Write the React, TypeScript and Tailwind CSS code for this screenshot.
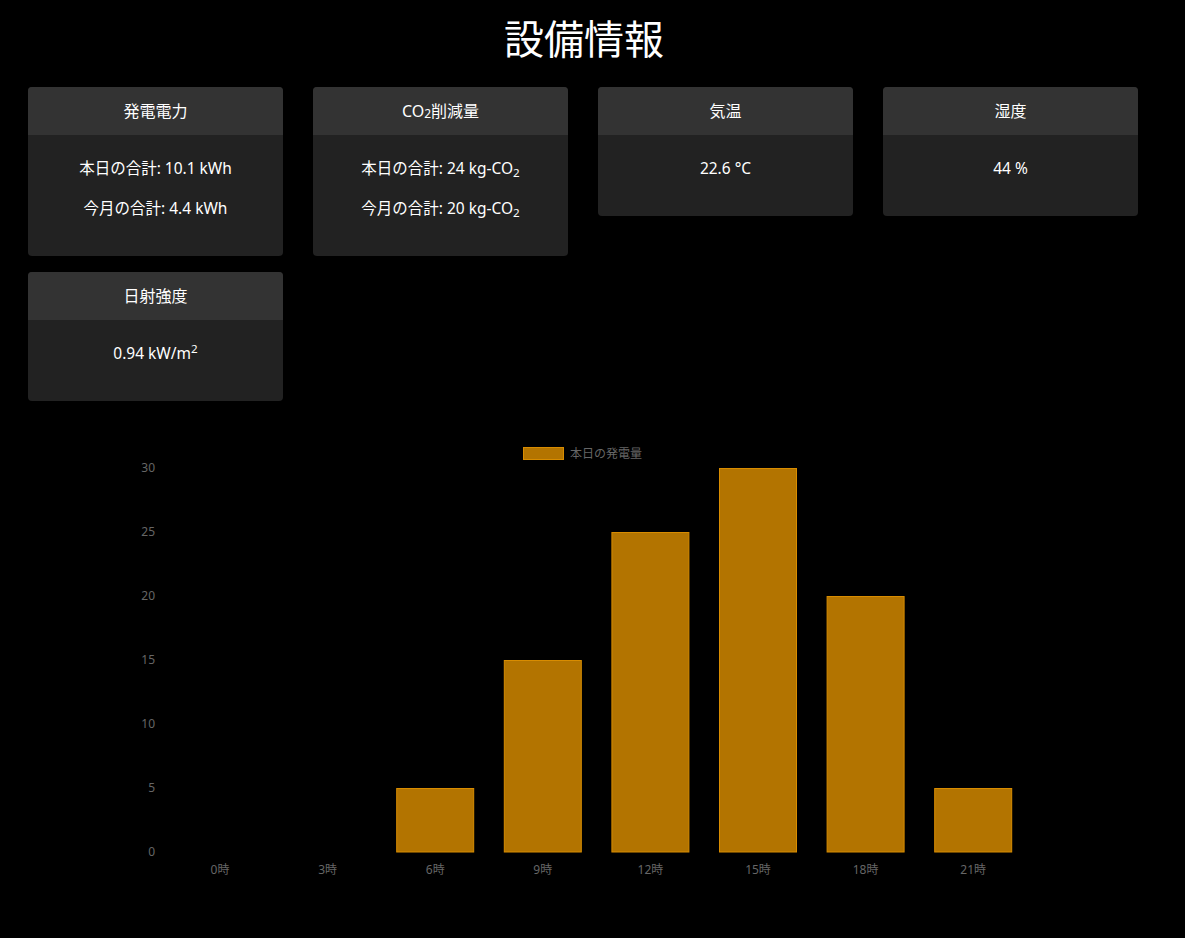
import React from 'react';

const font = { fontFamily: '"Noto Sans", "Noto Sans CJK JP", sans-serif' };

type Card = { title: React.ReactNode; lines: React.ReactNode[] };

const cards: Card[] = [
  { title: '発電電力', lines: ['本日の合計: 10.1 kWh', '今月の合計: 4.4 kWh'] },
  {
    title: (
      <>
        CO<sub>2</sub>削減量
      </>
    ),
    lines: [
      <>
        本日の合計: 24 kg-CO<sub>2</sub>
      </>,
      <>
        今月の合計: 20 kg-CO<sub>2</sub>
      </>,
    ],
  },
  { title: '気温', lines: ['22.6 °C'] },
  { title: '湿度', lines: ['44 %'] },
  {
    title: '日射強度',
    lines: [
      <>
        0.94 kW/m<sup>2</sup>
      </>,
    ],
  },
];

const hours = [0, 3, 6, 9, 12, 15, 18, 21];
const values = [0, 0, 5, 15, 25, 30, 20, 5];

function InfoCard({ card }: { card: Card }) {
  return (
    <div className="w-[255px] rounded-[4px] overflow-hidden bg-[#222222]">
      <div className="h-[48px] bg-[#333333] flex items-center justify-center text-[16px] text-white">
        {card.title}
      </div>
      <div className="pt-[21px] pb-[20px] text-center text-[15.5px] text-white">
        {card.lines.map((line, i) => (
          <p key={i} className="leading-[24px] mb-4">
            {line}
          </p>
        ))}
      </div>
    </div>
  );
}

// chart drawn in svg space; origin at page (120, 430)
function Chart() {
  const y = (v: number) => 421 - 12.8 * v;
  const cx = (i: number) => 100 + 107.6 * i;
  return (
    <svg width="920" height="460" className="block" style={font}>
      {/* legend */}
      <rect x="403.5" y="16.5" width="40" height="12" fill="#b37400" stroke="#d88c00" />
      <text x="450" y="26.5" fontSize="12" fill="#666666">
        本日の発電量
      </text>
      {[0, 5, 10, 15, 20, 25, 30].map((v) => (
        <text key={v} x="35" y={y(v) + 4} fontSize="12" fill="#666666" textAnchor="end">
          {v}
        </text>
      ))}
      {values.map((v, i) =>
        v > 0 ? (
          <rect
            key={i}
            x={cx(i) - 38.5}
            y={y(v) + 0.5}
            width="77"
            height={12.8 * v - 0.5}
            fill="#b37400"
            stroke="#d88c00"
            strokeWidth="1"
          />
        ) : null
      )}
      {hours.map((h, i) => (
        <text key={h} x={cx(i)} y="443" fontSize="12" fill="#666666" textAnchor="middle">
          {h}時
        </text>
      ))}
    </svg>
  );
}

export default function App() {
  return (
    <div className="min-h-screen bg-black" style={font}>
      <div className="w-[1168px]">
        <h1 className="h-[78px] mb-[9px] flex items-center justify-center text-[40px] text-white">
          設備情報
        </h1>
        <div className="pl-[28px] flex flex-wrap items-start gap-x-[30px] gap-y-[16px]">
          {cards.map((c, i) => (
            <InfoCard key={i} card={c} />
          ))}
        </div>
        <div className="pl-[120px] pt-[30px]">
          <Chart />
        </div>
      </div>
    </div>
  );
}
